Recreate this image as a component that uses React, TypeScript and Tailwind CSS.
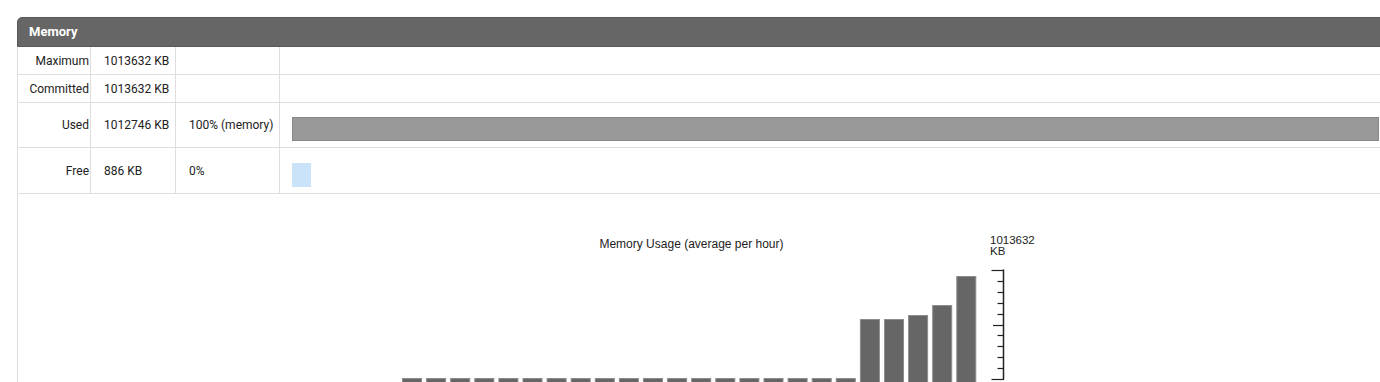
import React from "react";

const smallCount = 19;
const tallTops = [319, 319, 315, 305, 276];

function Chart() {
  const bars: { x: number; top: number }[] = [];
  for (let i = 0; i < 24; i++) {
    const x = 402 + i * 24.1;
    const top = i < smallCount ? 378 : tallTops[i - smallCount];
    bars.push({ x, top });
  }
  const ticks: { y: number; x1: number }[] = [];
  for (let i = 0; i <= 10; i++) {
    const y = 270 + i * 10.9;
    const x1 = i === 0 || i === 10 ? 991.5 : i === 5 ? 993 : 997.5;
    ticks.push({ y, x1 });
  }
  return (
    <svg
      width={1372}
      height={190}
      viewBox="18 194 1372 190"
      className="block"
      style={{ fontFamily: '"Liberation Sans", Arial, sans-serif' }}
    >
      <text x={691.5} y={248} textAnchor="middle" fontSize={12} fill="#222">
        Memory Usage (average per hour)
      </text>
      <text x={990} y={243.5} fontSize={11.5} fill="#222">
        1013632
      </text>
      <text x={990} y={254.5} fontSize={11.5} fill="#222">
        KB
      </text>
      {bars.map((b, i) => (
        <rect
          key={i}
          x={b.x + 0.5}
          y={b.top + 0.5}
          width={19}
          height={400 - b.top}
          fill="#666"
          stroke="#8c8c8c"
          strokeWidth={1}
        />
      ))}
      <line x1={1003.5} y1={269.5} x2={1003.5} y2={379.5} stroke="#222" strokeWidth={1.5} />
      {ticks.map((t, i) => (
        <line
          key={i}
          x1={t.x1}
          y1={Math.round(t.y) + 0.5}
          x2={1004}
          y2={Math.round(t.y) + 0.5}
          stroke="#222"
          strokeWidth={1.2}
        />
      ))}
    </svg>
  );
}

function Row({
  label,
  value,
  pct,
  h,
  children,
  pt,
}: {
  label: string;
  value: string;
  pct: string;
  h: string;
  children?: React.ReactNode;
  pt?: string;
}) {
  return (
    <div className={`flex border-b border-[#dedede] ${h}`}>
      <div className="w-[73px] shrink-0 border-r border-[#dedede] flex items-center justify-end pr-[1px]">
        {label}
      </div>
      <div className="w-[85px] shrink-0 border-r border-[#dedede] flex items-center pl-[13px]">
        {value}
      </div>
      <div className="w-[104px] shrink-0 border-r border-[#dedede] flex items-center pl-[13px]">
        {pct}
      </div>
      <div className={`flex-1 pl-[12px] ${pt ?? ""}`}>{children}</div>
    </div>
  );
}

export default function App() {
  return (
    <div
      className="w-[1380px] h-[382px] overflow-hidden bg-white pt-[17px] pl-[17px] text-[12px] text-[#212121]"
      style={{ fontFamily: 'Roboto, "Liberation Sans", Arial, sans-serif' }}
    >
      <div className="w-[1374px]">
        <div className="h-[30px] bg-[#666] border border-[#585858] rounded-t-[5px] flex items-center pl-[11px] text-white font-bold text-[13px]">
          Memory
        </div>
        <div className="border-l border-r border-[#dedede]">
          <Row label="Maximum" value="1013632 KB" pct="" h="h-[28px]" />
          <Row label="Committed" value="1013632 KB" pct="" h="h-[28px]" />
          <Row label="Used" value="1012746 KB" pct="100% (memory)" h="h-[45px]" pt="pt-[14px]">
            <div className="w-[1087px] h-[24px] bg-[#999] border border-[#888]" />
          </Row>
          <Row label="Free" value="886 KB" pct="0%" h="h-[46px]" pt="pt-[15px]">
            <div className="w-[19px] h-[24px] bg-[#cbe3f8]" />
          </Row>
          <Chart />
        </div>
      </div>
    </div>
  );
}
